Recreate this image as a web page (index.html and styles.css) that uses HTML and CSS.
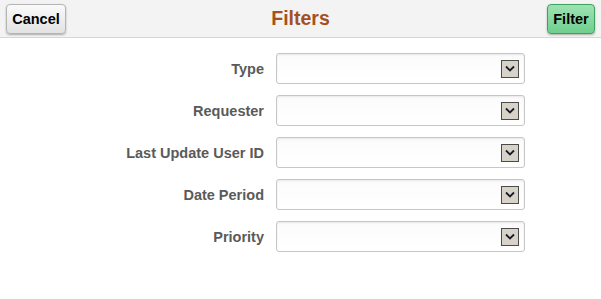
FILE: index.html
```html
<!doctype html>
<html>
  <head>
    <title>Filters</title>
    <link rel="stylesheet" href="styles.css">
  </head>
  <body>
    <div class="header">
      <div class="left"><button class="btn btn-cancel">Cancel</button></div>
      <div class="title">Filters</div>
      <div class="right"><button class="btn btn-filter">Filter</button></div>
    </div>

    <div class="form">
      <div class="row">
        <label class="label">Type</label>
        <div class="select"><span class="arrow"><svg width="10" height="7" viewBox="0 0 10 7"><path d="M1 1.5 L5 5.5 L9 1.5" fill="none" stroke="#1a1a2e" stroke-width="1.8"/></svg></span></div>
      </div>
      <div class="row">
        <label class="label">Requester</label>
        <div class="select"><span class="arrow"><svg width="10" height="7" viewBox="0 0 10 7"><path d="M1 1.5 L5 5.5 L9 1.5" fill="none" stroke="#1a1a2e" stroke-width="1.8"/></svg></span></div>
      </div>
      <div class="row">
        <label class="label">Last Update User ID</label>
        <div class="select"><span class="arrow"><svg width="10" height="7" viewBox="0 0 10 7"><path d="M1 1.5 L5 5.5 L9 1.5" fill="none" stroke="#1a1a2e" stroke-width="1.8"/></svg></span></div>
      </div>
      <div class="row">
        <label class="label">Date Period</label>
        <div class="select"><span class="arrow"><svg width="10" height="7" viewBox="0 0 10 7"><path d="M1 1.5 L5 5.5 L9 1.5" fill="none" stroke="#1a1a2e" stroke-width="1.8"/></svg></span></div>
      </div>
      <div class="row">
        <label class="label">Priority</label>
        <div class="select"><span class="arrow"><svg width="10" height="7" viewBox="0 0 10 7"><path d="M1 1.5 L5 5.5 L9 1.5" fill="none" stroke="#1a1a2e" stroke-width="1.8"/></svg></span></div>
      </div>
    </div>
  </body>
</html>
```

FILE: styles.css
```css
* {
  box-sizing: border-box;
  margin: 0;
  padding: 0;
}

body {
  font-family: 'Liberation Sans', Arial, sans-serif;
  background: #fff;
  width: 601px;
  height: 299px;
  overflow: hidden;
}

.header {
  height: 38px;
  background: #f3f3f3;
  border-bottom: 1px solid #d6d6d6;
  display: grid;
  grid-template-columns: 1fr auto 1fr;
  align-items: start;
  padding: 4px 6px 0 6px;
}

.right {
  display: flex;
  justify-content: flex-end;
}

.btn {
  height: 30px;
  border-radius: 4px;
  font-family: inherit;
  font-size: 14.5px;
  font-weight: bold;
  color: #000;
  padding: 0 4px;
  box-shadow: 0 1px 2px rgba(0, 0, 0, 0.3);
}

.btn-cancel {
  width: 60px;
  border: 1px solid #b5b5b5;
  background: linear-gradient(#fafafa, #e2e2e2);
}

.btn-filter {
  width: 48px;
  border: 1px solid #3fa160;
  background: linear-gradient(#9ee2b3, #6fcf8e);
}

.title {
  font-size: 19.5px;
  font-weight: bold;
  color: #a3521f;
  line-height: 29px;
}

.form {
  display: flex;
  flex-direction: column;
  gap: 11px;
  padding-top: 15px;
}

.row {
  display: flex;
  align-items: center;
  height: 31px;
}

.label {
  width: 265px;
  text-align: right;
  padding-right: 1px;
  font-size: 14.5px;
  font-weight: bold;
  color: #5a5a5a;
}

.select {
  width: 249px;
  height: 31px;
  margin-left: 11px;
  border: 1px solid #c6c6c6;
  border-radius: 3px;
  background: linear-gradient(#fbfbfb, #fff);
  box-shadow: inset 0 1px 2px rgba(0, 0, 0, 0.08);
  display: flex;
  align-items: center;
  justify-content: flex-end;
  padding-right: 5px;
}

.arrow {
  width: 18px;
  height: 18px;
  background: #d8d3c8;
  border: 1px solid #4a4a4a;
  display: flex;
  align-items: center;
  justify-content: center;
}
```
